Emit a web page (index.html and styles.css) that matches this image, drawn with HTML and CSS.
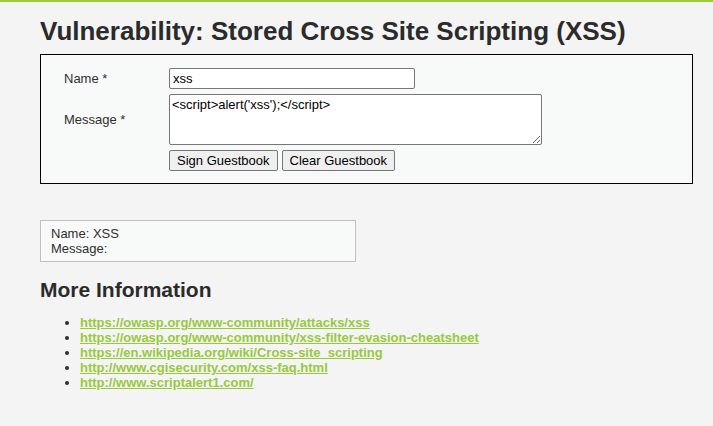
FILE: index.html
```html
<!DOCTYPE html>
<html>
<head>
<meta charset="utf-8">
<link rel="stylesheet" href="styles.css">
</head>
<body>
<div class="topbar"></div>
<div class="main">
  <h1 class="title">Vulnerability: Stored Cross Site Scripting (XSS)</h1>
  <div class="vulnerable">
    <form class="gb-form">
      <div class="row">
        <label class="lbl">Name *</label>
        <input class="txt-name" type="text" value="xss">
      </div>
      <div class="row row-msg">
        <label class="lbl">Message *</label>
        <textarea class="txt-msg">&lt;script&gt;alert('xss');&lt;/script&gt;</textarea>
      </div>
      <div class="row">
        <span class="lbl"></span>
        <div class="btns">
          <button type="button" class="btn">Sign Guestbook</button>
          <button type="button" class="btn">Clear Guestbook</button>
        </div>
      </div>
    </form>
  </div>
  <div class="entry">
    <div>Name: XSS</div>
    <div>Message: </div>
  </div>
  <h2 class="more">More Information</h2>
  <ul class="links">
    <li><a href="#">https://owasp.org/www-community/attacks/xss</a></li>
    <li><a href="#">https://owasp.org/www-community/xss-filter-evasion-cheatsheet</a></li>
    <li><a href="#">https://en.wikipedia.org/wiki/Cross-site_scripting</a></li>
    <li><a href="#">http://www.cgisecurity.com/xss-faq.html</a></li>
    <li><a href="#">http://www.scriptalert1.com/</a></li>
  </ul>
</div>
</body>
</html>
```
FILE: styles.css
```css
html, body {
  margin: 0;
  padding: 0;
  background: #f4f4f4;
}
body {
  font-family: "Liberation Sans", Arial, sans-serif;
  font-size: 13px;
  color: #2f2f2f;
  height: 426px;
  overflow: hidden;
}
.topbar {
  height: 2px;
  background: #9fcc35;
}
.main {
  padding: 0 20px 0 40px;
}
.title {
  margin: 12px 0 0 0;
  font-size: 26px;
  line-height: 34px;
  font-weight: bold;
  color: #2b2b2b;
}
.vulnerable {
  margin-top: 6px;
  border: 1px solid #000;
  background: #f8f9f9;
  padding: 13px 0 12px 23px;
}
.gb-form {
  display: flex;
  flex-direction: column;
}
.row {
  display: flex;
  align-items: center;
}
.row-msg {
  margin-top: 5px;
  align-items: flex-start;
}
.row-msg .lbl {
  margin-top: 18px;
}
.lbl {
  width: 105px;
  flex: none;
  color: #2f2f2f;
  font-size: 13px;
}
.txt-name {
  box-sizing: border-box;
  width: 246px;
  height: 21px;
  margin: 0;
  padding: 1px 3px;
  border: 1px solid #767676;
  border-radius: 2px;
  background: #fff;
  font-family: "Liberation Sans", Arial, sans-serif;
  font-size: 13px;
  color: #000;
}
.txt-msg {
  box-sizing: border-box;
  width: 373px;
  height: 51px;
  margin: 0;
  padding: 2px 2px;
  border: 1px solid #767676;
  border-radius: 2px;
  background: #fff;
  font-family: "Liberation Sans", Arial, sans-serif;
  font-size: 13px;
  color: #000;
  resize: both;
}
.btns {
  display: flex;
  gap: 4px;
  margin-top: 5px;
}
.btn {
  box-sizing: border-box;
  height: 21px;
  margin: 0;
  padding: 1px 7px;
  border: 1px solid #767676;
  border-radius: 2px;
  background: #efefef;
  font-family: "Liberation Sans", Arial, sans-serif;
  font-size: 13px;
  color: #000;
}
.entry {
  margin-top: 36px;
  width: 304px;
  border: 1px solid #c0c0c0;
  background: #f8f9f9;
  padding: 5px 0 5px 10px;
  line-height: 15px;
  font-size: 13px;
  color: #2f2f2f;
}
.more {
  margin: 15px 0 0 0;
  font-size: 21px;
  line-height: 25px;
  font-weight: bold;
  color: #2b2b2b;
}
.links {
  margin: 13px 0 0 0;
  padding-left: 40px;
  line-height: 15px;
}
.links a {
  color: #98c93c;
  font-weight: bold;
  text-decoration: underline;
  font-size: 13px;
}
.links li {
  color: #2f2f2f;
}
```
